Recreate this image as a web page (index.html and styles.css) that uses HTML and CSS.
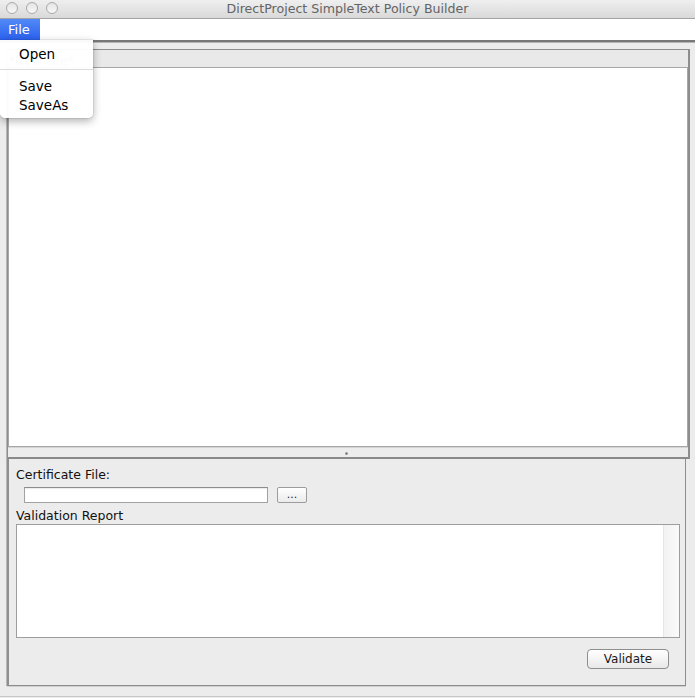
FILE: index.html
```html
<!DOCTYPE html>
<html lang="en">
<head>
<meta charset="utf-8">
<title>DirectProject SimpleText Policy Builder</title>
<link rel="stylesheet" href="styles.css">
</head>
<body>
<div class="window">
  <header class="titlebar">
    <div class="lights">
      <span class="light"></span>
      <span class="light"></span>
      <span class="light"></span>
    </div>
    <div class="title">DirectProject SimpleText Policy Builder</div>
    <div class="spacer"></div>
  </header>

  <nav class="menubar">
    <div class="menu-root is-open">File
      <ul class="dropdown">
        <li class="item">Open</li>
        <li class="sep"></li>
        <li class="item">Save</li>
        <li class="item">SaveAs</li>
      </ul>
    </div>
  </nav>

  <main class="content">
    <div class="frame">
      <div class="tabstrip"><span class="tab">*New File*</span></div>
      <div class="upper">
        <div class="editor"></div>
        <div class="divider"><span class="grip"></span></div>
      </div>
      <section class="lower">
        <div class="label">Certificate File:</div>
        <div class="file-row">
          <div class="field"></div>
          <button class="btn-browse">...</button>
        </div>
        <div class="label label-report">Validation Report</div>
        <div class="report">
          <div class="report-body"></div>
          <div class="scroll-track"></div>
        </div>
        <div class="actions">
          <button class="btn-validate">Validate</button>
        </div>
      </section>
    </div>
  </main>
  <div class="window-edge"></div>
</div>
</body>
</html>
```

FILE: styles.css
```css
* {
  box-sizing: border-box;
}

html, body {
  margin: 0;
  padding: 0;
}

body {
  background: #ececec;
  font-family: "DejaVu Sans", "Liberation Sans", sans-serif;
  color: #111;
  overflow: hidden;
}

.window {
  width: 695px;
  height: 698px;
  display: flex;
  flex-direction: column;
}

/* ---- title bar ---- */
.titlebar {
  height: 19px;
  display: grid;
  grid-template-columns: 1fr auto 1fr;
  background: linear-gradient(#efefef, #d9d9d9);
  border-bottom: 1px solid #a3a3a3;
}

.lights {
  display: flex;
  gap: 8px;
  padding: 2px 0 0 6px;
}

.light {
  width: 12px;
  height: 12px;
  border-radius: 50%;
  border: 1px solid #a9a9a9;
  background: linear-gradient(#e4e4e4, #f8f8f8);
}

.title {
  font-size: 12.6px;
  line-height: 17px;
  color: #646464;
  white-space: nowrap;
}

/* ---- menu bar ---- */
.menubar {
  height: 23px;
  background: #fff;
  border-bottom: 2px solid #787878;
  box-shadow: 0 1px 0 #b4b4b4;
  position: relative;
  z-index: 5;
}

.menu-root {
  position: relative;
  display: inline-block;
  height: 21px;
  line-height: 21px;
  font-size: 13px;
  padding: 0 10px 0 8px;
  color: #000;
}

.menu-root.is-open {
  background: linear-gradient(#5189f7, #2b61ee);
  color: #fff;
}

.dropdown {
  position: absolute;
  top: 21px;
  left: 0;
  width: 93px;
  margin: 0;
  padding: 5px 0 3px;
  list-style: none;
  background: rgba(255, 255, 255, 0.96);
  border-radius: 0 0 5px 5px;
  box-shadow: 0 3px 9px rgba(0, 0, 0, 0.32), 0 0 0 1px rgba(0, 0, 0, 0.06);
  color: #000;
}

.dropdown .item {
  font-size: 13.5px;
  line-height: 19px;
  padding-left: 19px;
}

.dropdown .sep {
  height: 1px;
  margin: 5px 0 7px;
  background: #dcdcdc;
}

/* ---- main frame ---- */
.content {
  flex: 1;
}

.frame {
  margin: 7px 0 0 6px;
  width: 684px;
  border-left: 1px solid #b7b7b7;
}

.tabstrip {
  height: 18px;
  background: #e9e9e9;
  border-top: 1px solid #8d8d8d;
  border-right: 2px solid #8d8d8d;
}

.tab {
  display: inline-block;
  padding-left: 2px;
  font-size: 12.5px;
  line-height: 17px;
  color: #8a8a8a;
}

.upper {
  height: 392px;
  display: flex;
  flex-direction: column;
  border-left: 1px solid #8d8d8d;
  border-right: 2px solid #8d8d8d;
}

.editor {
  flex: 1;
  background: #fff;
  border: 1px solid #a7a7a7;
}

.divider {
  position: relative;
  height: 12px;
  border-top: 1px solid #d4d4d4;
  border-bottom: 2px solid #898989;
}

.grip {
  position: absolute;
  left: 337px;
  top: 4px;
  width: 3px;
  height: 3px;
  border-radius: 50%;
  background: radial-gradient(#6d6d6d, #b5b5b5);
}

/* ---- lower panel ---- */
.lower {
  width: 679px;
  height: 227px;
  display: flex;
  flex-direction: column;
  padding: 8px 6px 0 7px;
  border-left: 2px solid #8f8f8f;
  border-right: 1px solid #8d8d8d;
  border-bottom: 1px solid #8d8d8d;
  box-shadow: 0 1px 0 #cfcfcf;
}

.label {
  font-size: 12.5px;
  line-height: 16px;
  color: #111;
}

.file-row {
  display: flex;
  align-items: flex-start;
  margin: 4px 0 0 8px;
}

.field {
  width: 244px;
  height: 16px;
  background: #fff;
  border: 1px solid #a2a2a2;
  border-top-color: #8c8c8c;
  box-shadow: inset 0 1px 1px rgba(0, 0, 0, 0.08);
}

.btn-browse {
  width: 30px;
  height: 16px;
  margin-left: 9px;
  padding: 0;
  border: 1px solid #9c9c9c;
  border-radius: 2px;
  background: linear-gradient(#ffffff, #ebebeb);
  font-family: inherit;
  font-size: 11px;
  line-height: 14px;
  color: #222;
}

.label-report {
  margin-top: 5px;
}

.report {
  height: 114px;
  width: 664px;
  display: flex;
  border: 1px solid #9d9d9d;
  background: #fff;
}

.report-body {
  flex: 1;
}

.scroll-track {
  width: 16px;
  border-left: 1px solid #e6e6e6;
  background: linear-gradient(90deg, #f2f2f2, #fafafa);
}

.actions {
  display: flex;
  justify-content: flex-end;
  width: 664px;
  margin-top: 11px;
  padding-right: 11px;
}

.btn-validate {
  width: 82px;
  height: 20px;
  padding: 0;
  border: 1px solid #8e8e8e;
  border-radius: 4px;
  background: linear-gradient(#ffffff, #f2f2f2 60%, #e8e8e8);
  font-family: inherit;
  font-size: 12px;
  line-height: 18px;
  color: #1a1a1a;
}

.window-edge {
  height: 2px;
  margin-bottom: 0;
  border-top: 1px solid #c6c6c6;
}
```
